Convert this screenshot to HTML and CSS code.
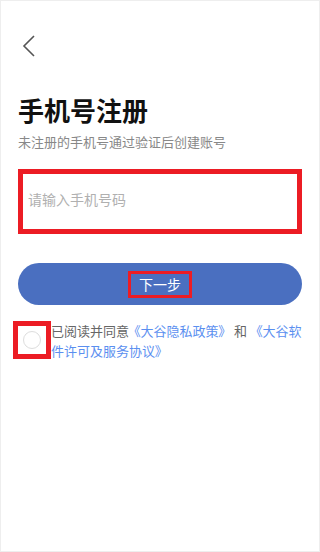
FILE: index.html
```
<!DOCTYPE html>
<html>
<head>
<meta charset="UTF-8">
<title>手机号注册</title>
<link rel="stylesheet" href="styles.css">
</head>
<body>

<div class="page">
	<div class="back">
		<svg width="14" height="22" viewBox="0 0 14 22"><path d="M12 1 L2 11 L12 21" fill="none" stroke="#555" stroke-width="1.6"/></svg>
	</div>

	<h1 class="title">手机号注册</h1>
	<p class="subtitle">未注册的手机号通过验证后创建账号</p>

	<div class="phone-box">
		<input type="text" class="phone-input" placeholder="请输入手机号码">
	</div>

	<button type="button" class="btn-next"><span class="btn-label">下一步</span></button>

	<div class="agree">
		<div class="check-box"><span class="check-circle"></span></div>
		<p class="agree-text">已阅读并同意<a href="#" class="link-first">《大谷隐私政策》</a><span class="and">和</span><a href="#">《大谷软件许可及服务协议》</a></p>
	</div>
</div>

</body>
</html>
```

FILE: styles.css
```
html, body {
	margin: 0;
	padding: 0;
	background: #fff;
}

.page {
	width: 320px;
	height: 552px;
	box-sizing: border-box;
	border: 1px solid #eee;
	padding: 0 17px;
	font-family: "Noto Sans CJK SC", "Noto Sans", sans-serif;
}

.back {
	height: 22px;
	margin-top: 34px;
	padding-left: 4px;
}

.back svg {
	display: block;
}

.title {
	margin: 36px 0 0 0;
	font-size: 26px;
	line-height: 34px;
	font-weight: 700;
	color: #111;
}

.subtitle {
	margin: 5px 0 0 0;
	font-size: 13px;
	line-height: 20px;
	color: #888;
}

.phone-box {
	margin-top: 17px;
	height: 65px;
	box-sizing: border-box;
	border: 5px solid #ec1c24;
	display: flex;
	align-items: center;
	padding-bottom: 6px;
}

.phone-input {
	border: none;
	outline: none;
	width: 100%;
	padding: 0 0 0 5px;
	font-family: inherit;
	font-size: 14px;
	color: #333;
	background: transparent;
}

.phone-input::placeholder {
	color: #b0b0b0;
}

.btn-next {
	display: flex;
	justify-content: center;
	align-items: center;
	width: 100%;
	height: 42px;
	margin-top: 29px;
	border: none;
	border-radius: 21px;
	background: #4a6fc0;
	padding: 0;
	font-family: inherit;
}

.btn-label {
	box-sizing: border-box;
	width: 64px;
	height: 27px;
	border: 3px solid #ec1c24;
	color: #fff;
	font-size: 14px;
	line-height: 21px;
	text-align: center;
}

.agree {
	display: flex;
	align-items: flex-start;
	margin-top: 16px;
	margin-left: -5px;
}

.check-box {
	flex: none;
	width: 38px;
	height: 38px;
	box-sizing: border-box;
	border: 5px solid #ec1c24;
	display: flex;
	justify-content: center;
	align-items: center;
}

.check-circle {
	width: 18px;
	height: 18px;
	box-sizing: border-box;
	border: 1px solid #ddd;
	border-radius: 50%;
}

.agree-text {
	margin: 0;
	width: 262px;
	font-size: 13px;
	line-height: 20px;
	color: #666;
}

.agree-text a {
	color: #5b8ff0;
	text-decoration: none;
	font-feature-settings: "palt";
}

.link-first {
	margin-left: 5px;
}

.and {
	margin: 0 9px;
}
```
